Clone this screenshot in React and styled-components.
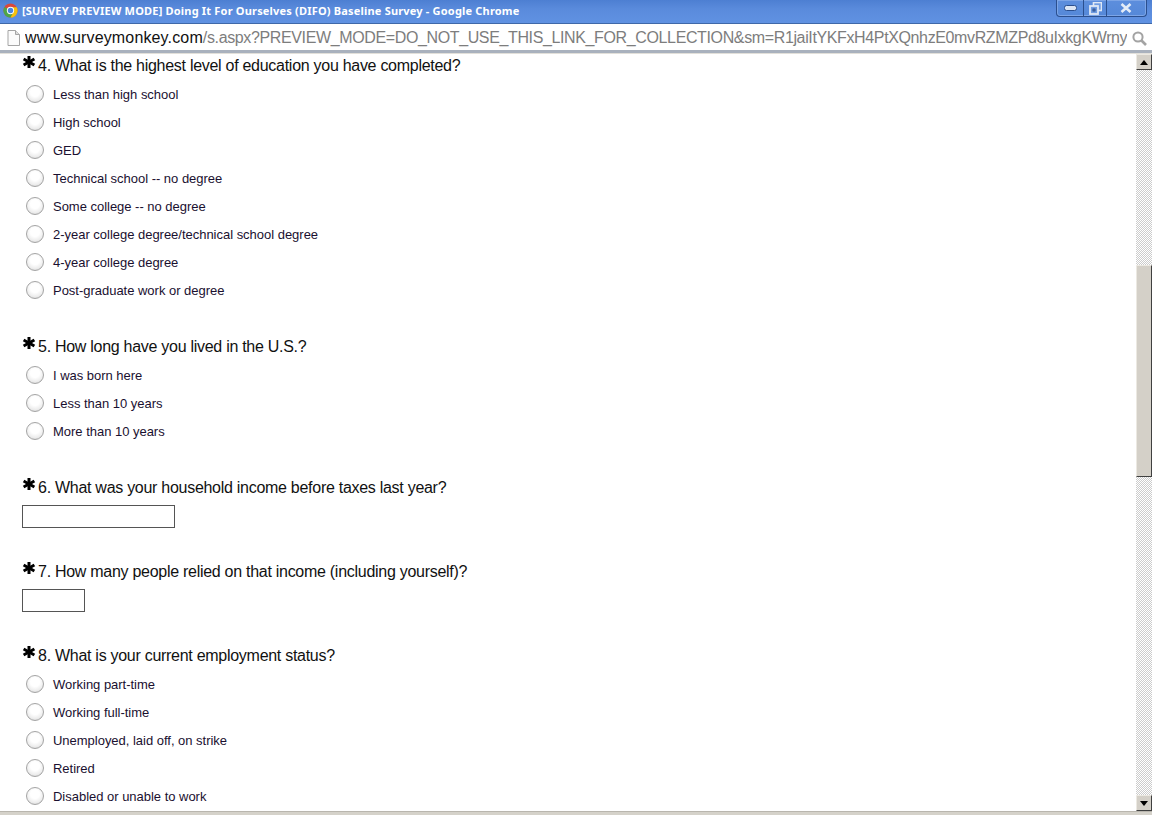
import React from "react";
import styled, { createGlobalStyle } from "styled-components";

const Global = createGlobalStyle`
  html, body { margin: 0; padding: 0; background: #fff; overflow: hidden; }
  * { box-sizing: border-box; }
`;

const Win = styled.div`
  width: 1152px; height: 815px; display: flex; flex-direction: column; overflow: hidden;
  font-family: "Liberation Sans", Arial, sans-serif; background: #fff;
`;
const TitleBar = styled.div`
  height: 24px; flex: none; display: flex; align-items: flex-start; padding-left: 3px;
  background: linear-gradient(#4d7fd2 0%, #5a8bdc 40%, #6092e2 100%);
  border-bottom: 1px solid #3f68a8;
`;
const LogoSlot = styled.div`
  margin-top: 3px; height: 15px; flex: none; display: flex;
`;
const TitleText = styled.div`
  margin-left: 4px; font: bold 11px/21px "Noto Sans", sans-serif; letter-spacing: 0.19px; color: #fff;
  white-space: nowrap; flex: 1;
`;
const Controls = styled.div`
  display: flex; width: 91px; height: 17px; margin-right: 5px; border: 1px solid #2b4f8e; border-top: none;
  border-radius: 0 0 4px 4px; background: linear-gradient(#5d8edd, #5588d8);
  box-shadow: inset 0 0 0 1px #7da5e6;
`;
const Ctl = styled.div`
  flex: ${p => p.$w}; display: flex; align-items: center; justify-content: center;
  & + & { border-left: 1px solid #2b4f8e; }
`;
const AddressBar = styled.div`
  height: 29px; flex: none; background: #fff; display: flex; align-items: center; padding: 2px 5px 0 7px;
  border-bottom: 3px solid #a9b1bd;
`;
const Url = styled.div`
  margin-left: 5px; flex: 1; min-width: 0; overflow: hidden; white-space: nowrap; font-size: 16px; color: #7d7d7d;
  letter-spacing: -0.37px;
  b { font-weight: normal; color: #111; letter-spacing: 0.15px; }
`;
const Body = styled.div`
  flex: 1; min-height: 0; display: flex; border-top: 1px solid #e2e0da;
`;
const Content = styled.div`
  flex: 1; overflow: hidden; padding: 1px 0 0 22px;
`;
const Question = styled.section`
  margin-bottom: ${p => p.$mb}px;
`;
const QTitle = styled.div`
  display: flex; height: 22px; align-items: center; font-size: 16px; letter-spacing: -0.28px; color: #111; white-space: nowrap;
`;
const StarMark = styled.svg`
  width: 16px; height: 22px; flex: none;
`;
const Options = styled.div`
  margin-top: 3px; display: flex; flex-direction: column;
`;
const Option = styled.label`
  height: 28px; display: flex; align-items: center; padding-left: 4px; font-size: 13px; letter-spacing: -0.02px; color: #1a1030; white-space: nowrap;
`;
const Radio = styled.span`
  width: 18px; height: 18px; border-radius: 50%; margin-right: 9px; flex: none;
  border: 1px solid #a4a4a4;
  background: radial-gradient(circle at 50% 38%, #fff 35%, #ececec 68%, #bdbdbd 100%);
`;
const TextBox = styled.div`
  margin-top: 6px; width: ${p => p.$w}px; height: 23px; border: 1px solid #555; background: #fff;
`;
const Scroll = styled.div`
  width: 16px; flex: none; display: flex; flex-direction: column;
  background-color: #fff;
  background-image: conic-gradient(#cccccc 25%, #fff 0 50%, #cccccc 0 75%, #fff 0);
  background-size: 2px 2px;
`;
const ScrollBtn = styled.div`
  height: 16px; flex: none; background: #d4d0c8; display: flex; align-items: center; justify-content: center;
  border: 1px solid; border-color: #ece9e2 #404040 #404040 #ece9e2;
`;
const Gap = styled.div`
  height: ${p => p.$h}px; flex: none;
`;
const Thumb = styled.div`
  height: 212px; flex: none; background: #d4d0c8; border: 1px solid; border-color: #ece9e2 #404040 #404040 #ece9e2;
`;
const Bottom = styled.div`
  height: 4px; flex: none; background: #d5d2ca; border-top: 1px solid #b9b6ae;
`;

const ChromeLogo = () => (
  <svg width="15" height="15" viewBox="0 0 16 16">
    <circle cx="8" cy="8" r="7.5" fill="#d9483b" />
    <path d="M8 8 L1.5 4.2 A7.5 7.5 0 0 0 8 15.5 L11 10z" fill="#4da64a" />
    <path d="M8 4.6 H14.7 A7.5 7.5 0 0 1 8 15.5 L11.2 9.5z" fill="#f4c20d" />
    <circle cx="8" cy="8" r="3.9" fill="#fff" />
    <circle cx="8" cy="8" r="2.9" fill="#4a86e0" />
  </svg>
);
const PageIcon = () => (
  <svg width="13" height="16" viewBox="0 0 13 16" fill="#fbfbfb" stroke="#a5a5a5">
    <path d="M1 .5h7.5L12.5 4.5V15.5H1z" />
    <path d="M8.5 .5V4.5H12.5" fill="#ddd" />
  </svg>
);
const SearchIcon = () => (
  <svg width="15" height="15" viewBox="0 0 15 15" fill="none" stroke="#a3a3a3" style={{ flex: "none", marginLeft: 5 }}>
    <circle cx="6" cy="6" r="4.6" strokeWidth="2" />
    <path d="M9.5 9.5 L14 14" strokeWidth="2.6" />
  </svg>
);
const Star = () => (
  <StarMark viewBox="0 0 16 22">
    <g stroke="#000" strokeWidth="3">
      <path d="M7 1V13" />
      <path d="M1.6 4L12.4 10" />
      <path d="M12.4 4L1.6 10" />
    </g>
  </StarMark>
);
const Up = () => <svg width="8" height="5" viewBox="0 0 8 5"><path d="M4 0L8 5H0z" /></svg>;
const Down = () => <svg width="8" height="5" viewBox="0 0 8 5"><path d="M0 0H8L4 5z" /></svg>;

const questions = [
  { n: 4, t: "What is the highest level of education you have completed?", o: ["Less than high school", "High school", "GED", "Technical school -- no degree", "Some college -- no degree", "2-year college degree/technical school degree", "4-year college degree", "Post-graduate work or degree"] },
  { n: 5, t: "How long have you lived in the U.S.?", o: ["I was born here", "Less than 10 years", "More than 10 years"] },
  { n: 6, t: "What was your household income before taxes last year?", w: 153 },
  { n: 7, t: "How many people relied on that income (including yourself)?", w: 63 },
  { n: 8, t: "What is your current employment status?", o: ["Working part-time", "Working full-time", "Unemployed, laid off, on strike", "Retired", "Disabled or unable to work"] },
];

export default function App() {
  return (
    <Win>
      <Global />
      <TitleBar>
        <LogoSlot><ChromeLogo /></LogoSlot>
        <TitleText>[SURVEY PREVIEW MODE] Doing It For Ourselves (DIFO) Baseline Survey - Google Chrome</TitleText>
        <Controls>
          <Ctl $w={27}><svg width="13" height="6" viewBox="0 0 13 6"><rect x=".5" y=".5" width="12" height="5" rx="2" fill="#dbe5f4" stroke="#2b4f8e" /></svg></Ctl>
          <Ctl $w={22}><svg width="13" height="13" viewBox="0 0 13 13" fill="#6f9ce2" stroke="#1f3f78"><rect x="4.5" y=".5" width="8" height="8" strokeWidth="1.6" stroke="#dfe8f6" /><rect x="1" y="4" width="8" height="8" strokeWidth="1.8" stroke="#dfe8f6" /><rect x="4" y="7" width="2" height="2" strokeWidth=".8" /></svg></Ctl>
          <Ctl $w={40}><svg width="12" height="10" viewBox="0 0 12 10" stroke="#e4ecf7" strokeWidth="2.6"><path d="M1.5 1L10.5 9M10.5 1L1.5 9" /></svg></Ctl>
        </Controls>
      </TitleBar>
      <AddressBar>
        <PageIcon />
        <Url><b>www.surveymonkey.com</b>/s.aspx?PREVIEW_MODE=DO_NOT_USE_THIS_LINK_FOR_COLLECTION&amp;sm=R1jaiItYKFxH4PtXQnhzE0mvRZMZPd8uIxkgKWrny</Url>
        <SearchIcon />
      </AddressBar>
      <Body>
        <Content>
          {questions.map(q => (
            <Question key={q.n} $mb={q.o ? 32 : 33}>
              <QTitle><Star />{q.n}. {q.t}</QTitle>
              {q.o ? (
                <Options>{q.o.map(x => <Option key={x}><Radio />{x}</Option>)}</Options>
              ) : <TextBox $w={q.w} />}
            </Question>
          ))}
        </Content>
        <Scroll>
          <ScrollBtn><Up /></ScrollBtn>
          <Gap $h={195} />
          <Thumb />
          <Gap $h={318} />
          <ScrollBtn><Down /></ScrollBtn>
        </Scroll>
      </Body>
      <Bottom />
    </Win>
  );
}
